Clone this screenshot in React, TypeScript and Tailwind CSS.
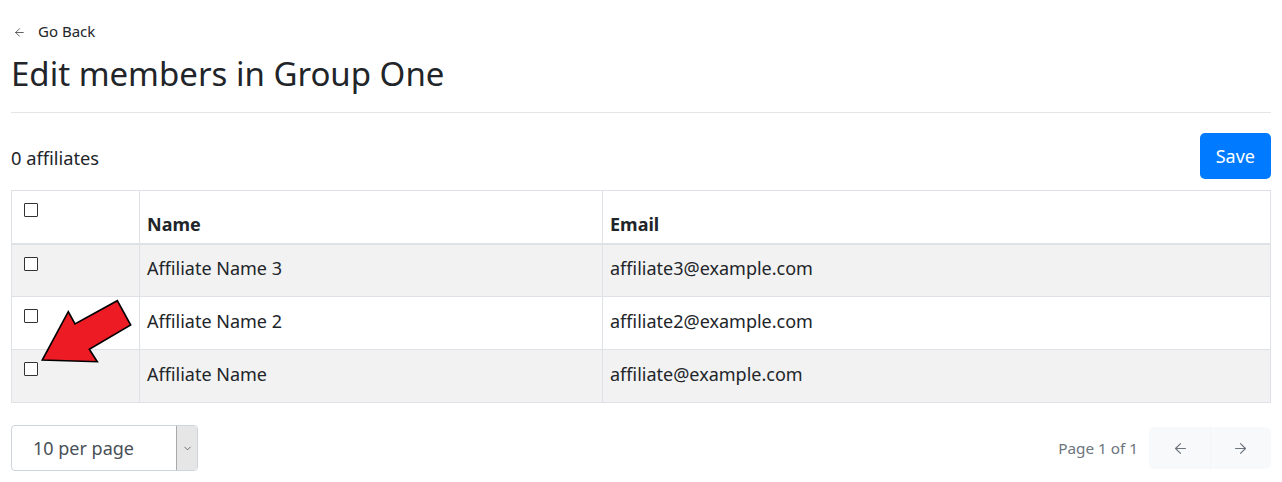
import { ArrowLeft, ArrowRight, ChevronDown } from "lucide-react";

const rows = [
  { name: "Affiliate Name 3", email: "affiliate3@example.com" },
  { name: "Affiliate Name 2", email: "affiliate2@example.com" },
  { name: "Affiliate Name", email: "affiliate@example.com" },
];

function Box() {
  return <span className="block h-[14px] w-[14px] rounded-[1px] border border-[#333] bg-white" />;
}

export default function App() {
  return (
    <div className="relative min-h-screen bg-white px-[11px] pt-5 font-['Noto_Sans',sans-serif] text-[#212529]">
      <a className="flex h-[22px] items-center gap-[12px] pl-[2px] text-[15px] text-[#212529]">
        <ArrowLeft size={13} strokeWidth={1.4} className="mt-[2px] text-[#333]" />
        <span>Go Back</span>
      </a>
      <h1 className="mt-[13px] text-[33px] leading-[38px] font-normal">Edit members in Group One</h1>
      <hr className="mt-[19px] border-t border-[#e5e5e5]" />

      <div className="mt-[20px] flex items-center justify-between">
        <span className="pt-[3px] text-[18.3px]">0 affiliates</span>
        <button className="h-[46px] rounded-[5px] bg-[#007bff] px-4 text-[18px] text-white">Save</button>
      </div>

      <table className="mt-[11px] w-full border-collapse text-[18px]">
        <thead>
          <tr className="border-b-2 border-[#dee2e6]">
            <th className="h-[53px] w-[128px] border border-[#dee2e6] px-3 pt-3 align-top">
              <Box />
            </th>
            <th className="w-[463px] border border-[#dee2e6] pr-2 pl-[7px] pb-[5px] text-left align-bottom font-bold">Name</th>
            <th className="border border-[#dee2e6] pr-2 pl-[7px] pb-[5px] text-left align-bottom font-bold">Email</th>
          </tr>
        </thead>
        <tbody>
          {rows.map((r, i) => (
            <tr key={r.email} className={i % 2 === 0 ? "bg-[#f2f2f2]" : "bg-white"}>
              <td className="h-[53px] border border-[#dee2e6] px-3 pt-[12px] align-top">
                <Box />
              </td>
              <td className="border border-[#dee2e6] pr-2 pl-[7px] pb-[4px] align-middle">{r.name}</td>
              <td className="border border-[#dee2e6] pr-2 pl-[7px] pb-[4px] align-middle">{r.email}</td>
            </tr>
          ))}
        </tbody>
      </table>

      <div className="mt-[22px] flex items-center justify-between">
        <div className="flex h-[46px] w-[187px] overflow-hidden rounded-[4px] border border-[#ced4da]">
          <span className="flex flex-1 items-center pl-[21px] text-[18px] text-[#495057]">10 per page</span>
          <span className="flex w-[21px] items-center justify-center border-l border-[#aaa] bg-[#e6e6e6]">
            <ChevronDown size={11} strokeWidth={1.6} className="text-[#444]" />
          </span>
        </div>
        <div className="flex items-center gap-[11px]">
          <span className="text-[15.3px] text-[#6c757d]">Page 1 of 1</span>
          <div className="flex h-[42px] w-[122px] overflow-hidden rounded-[5px] bg-[#f8f9fa]">
            <span className="flex flex-1 items-center justify-center border-r border-[#f4f5f7]">
              <ArrowLeft size={17} strokeWidth={1.6} className="ml-[2px] text-[#6c757d]" />
            </span>
            <span className="flex flex-1 items-center justify-center">
              <ArrowRight size={17} strokeWidth={1.6} className="text-[#6c757d]" />
            </span>
          </div>
        </div>
      </div>

      <svg className="pointer-events-none absolute left-0 top-0" width="140" height="370" viewBox="0 0 140 370">
        <polygon
          points="42.3,360 68.3,311.7 75,324 117.3,300.7 130.7,325 89.3,349.3 97.3,361.7"
          fill="#ed1c24"
          stroke="#000"
          strokeWidth="1.6"
          strokeLinejoin="miter"
        />
      </svg>
    </div>
  );
}
